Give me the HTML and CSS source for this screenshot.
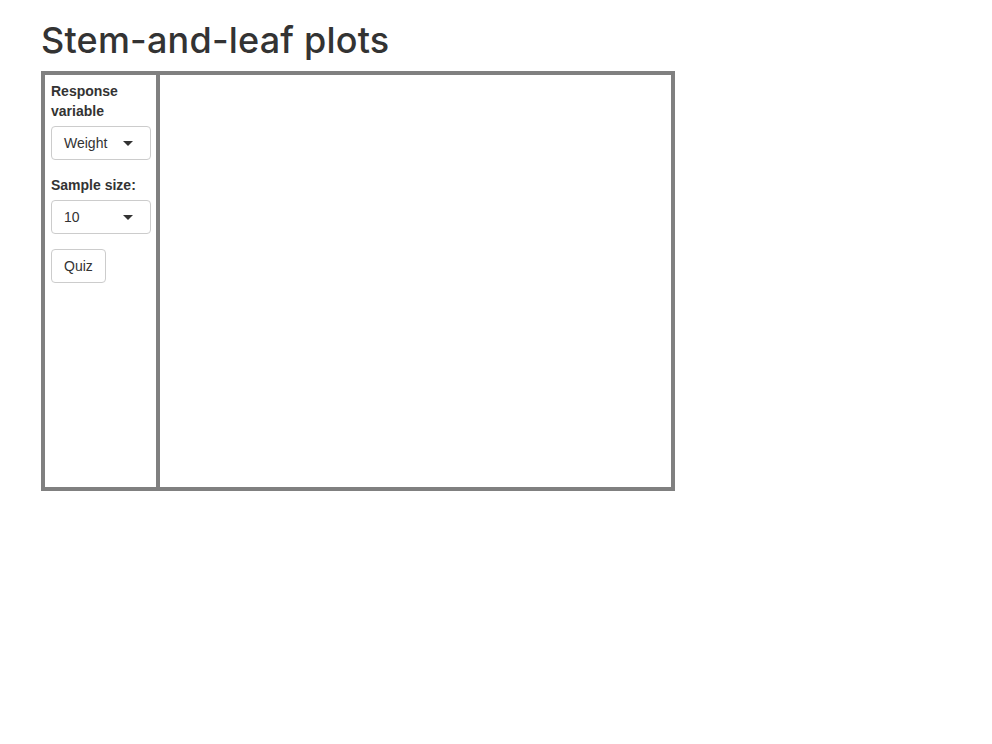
FILE: index.html
```html
<!DOCTYPE html>
<html lang="en">
<head>
    <meta charset="UTF-8">
    <title>Stem-and-leaf plots</title>
    <link rel="stylesheet" href="styles.css">
</head>
<body>
    <div class="page">
        <h1>Stem-and-leaf plots</h1>
        <div class="app-box">
            <div class="sidebar">
                <div class="form-group">
                    <label class="control-label">Response variable</label>
                    <div class="select-box">
                        <span class="select-value">Weight</span>
                        <span class="caret"></span>
                    </div>
                </div>
                <div class="form-group">
                    <label class="control-label">Sample size:</label>
                    <div class="select-box">
                        <span class="select-value">10</span>
                        <span class="caret"></span>
                    </div>
                </div>
                <button class="btn">Quiz</button>
            </div>
            <div class="main-panel"></div>
        </div>
    </div>
</body>
</html>
```

FILE: styles.css
```css
* {
    box-sizing: border-box;
}

body {
    margin: 0;
    font-family: "Liberation Sans", Arial, sans-serif;
    font-size: 14px;
    line-height: 20px;
    color: #333;
    background: #fff;
}

.page {
    padding: 0 41px;
}

h1 {
    margin: 20px 0 11px;
    font-family: Inter, "Liberation Sans", sans-serif;
    font-size: 36px;
    font-weight: 500;
    line-height: 40px;
    letter-spacing: 0.2px;
}

.app-box {
    display: flex;
    width: 634px;
    height: 420px;
    border: 4px solid #808080;
}

.sidebar {
    width: 115px;
    padding: 6px;
    border-right: 4px solid #808080;
}

.main-panel {
    flex: 1;
}

.form-group {
    margin-bottom: 15px;
}

.control-label {
    display: block;
    margin-bottom: 5px;
    font-weight: bold;
}

.select-box {
    position: relative;
    width: 100px;
    height: 34px;
    padding: 6px 12px;
    border: 1px solid #ccc;
    border-radius: 4px;
    background: #fff;
}

.caret {
    position: absolute;
    top: 14px;
    right: 17px;
    width: 0;
    height: 0;
    border-style: solid;
    border-width: 5px 5px 0 5px;
    border-color: #333 transparent transparent transparent;
}

.btn {
    display: block;
    height: 34px;
    padding: 6px 12px;
    font-family: inherit;
    font-size: 14px;
    line-height: 20px;
    color: #333;
    background: #fff;
    border: 1px solid #ccc;
    border-radius: 4px;
    cursor: pointer;
}
```
